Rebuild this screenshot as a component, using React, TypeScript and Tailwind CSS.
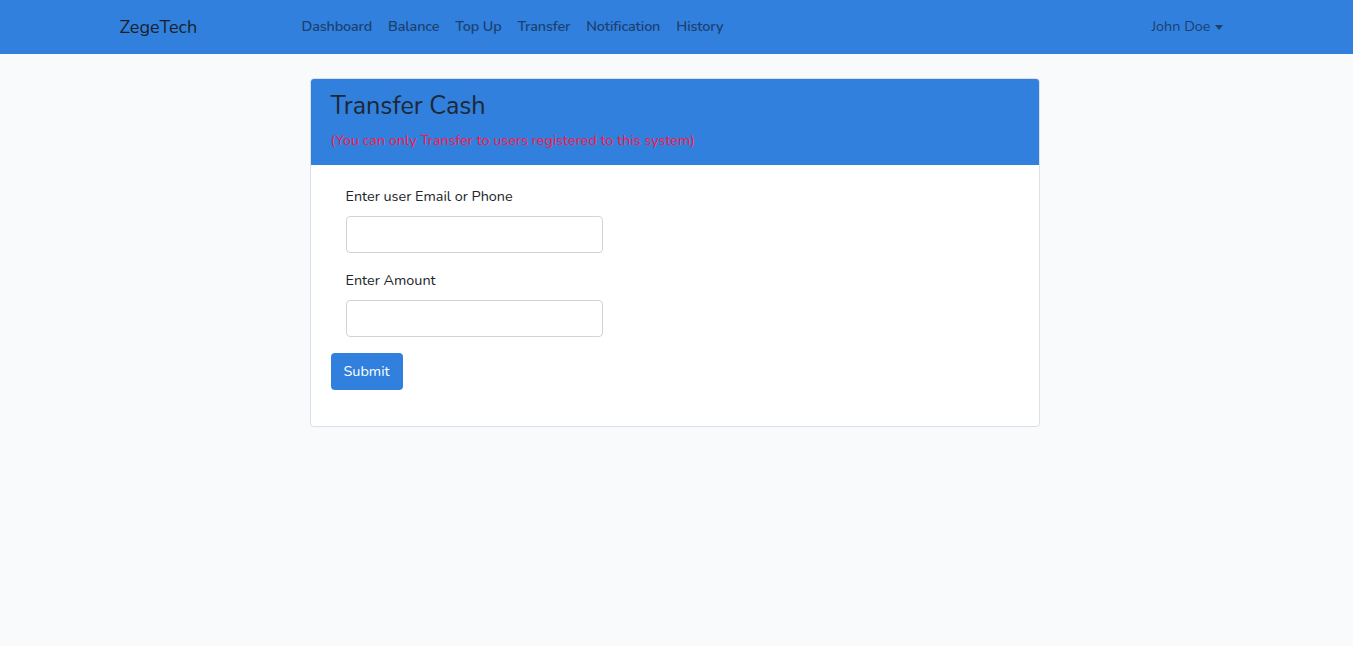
const links = ['Dashboard', 'Balance', 'Top Up', 'Transfer', 'Notification', 'History'];

function Field({ label }: { label: string }) {
  return (
    <div className="flex flex-col">
      <label className="mb-[9px] text-[14.4px] leading-[22px] text-[#212529]">{label}</label>
      <input
        type="text"
        className="h-[37px] w-[257px] rounded-[4px] border border-[#ced4da] bg-white px-3 outline-none"
      />
    </div>
  );
}

export default function App() {
  return (
    <div
      className="min-h-[646px] bg-[#f8fafc] pr-[4px] text-[#212529]"
      style={{ fontFamily: 'Nunito, Lato, "Open Sans", sans-serif' }}
    >
      <nav className="-mr-[4px] h-[54px] bg-[#3180de] pr-[4px]">
        <div className="mx-auto flex h-full w-[1140px] items-center px-[15px]">
          <span className="w-[174px] text-[18px] text-[#1a1f27]">ZegeTech</span>
          <ul className="flex items-center">
            {links.map((l) => (
              <li key={l} className="px-[8px] text-[14.4px] font-semibold tracking-[-0.15px] text-[#1c4170]">
                {l}
              </li>
            ))}
          </ul>
          <div className="ml-auto flex items-center gap-[4px] pr-[7px] text-[14.4px] text-[#1c4170]">
            John Doe
            <span className="mt-[1px] inline-block border-x-[4.5px] border-t-[5px] border-x-transparent border-t-[#1c4170]" />
          </div>
        </div>
      </nav>

      <main className="pt-[24px]">
        <div className="mx-auto w-[730px] overflow-hidden rounded-[4px] border border-[#dcdfe3] bg-white">
          <div className="h-[86px] bg-[#3180de] px-[20px] pt-[11px]">
            <h2 className="text-[25.2px] leading-[32px] text-[#1e2733]">Transfer Cash</h2>
            <p className="mt-[9px] text-[14.4px] leading-[18px] text-[#ff1744]">
              (You can only Transfer to users registered to this system)
            </p>
          </div>
          <div className="px-[20px] pb-[36px] pt-[20px]">
            <div className="flex flex-col gap-[16px] pl-[15px]">
              <Field label="Enter user Email or Phone" />
              <Field label="Enter Amount" />
            </div>
            <button className="mt-[16px] h-[37px] rounded-[4px] bg-[#3180de] px-[13px] text-[14.4px] text-white">
              Submit
            </button>
          </div>
        </div>
      </main>
    </div>
  );
}
